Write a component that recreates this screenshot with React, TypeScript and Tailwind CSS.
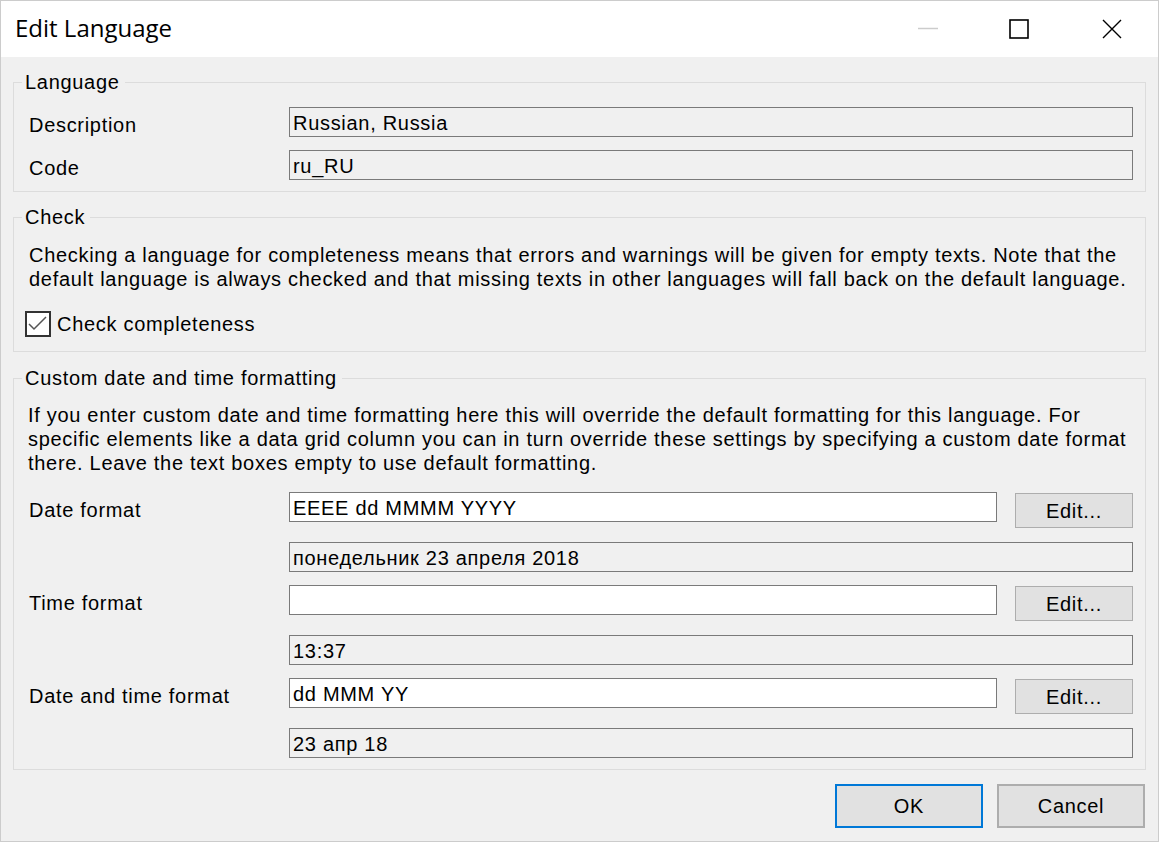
import type { ReactNode } from 'react'

function Field({ children, readOnly }: { children?: ReactNode; readOnly?: boolean }) {
  return (
    <div
      className={`h-[30px] flex-1 border border-[#7a7a7a] pl-[3px] pt-[3px] leading-[24px] whitespace-nowrap ${
        readOnly ? 'bg-[#f0f0f0]' : 'bg-white'
      }`}
    >
      {children}
    </div>
  )
}

function EditButton() {
  return (
    <button className="mt-[1px] h-[35px] w-[118px] shrink-0 border border-[#adadad] bg-[#e1e1e1] leading-[24px]">
      Edit...
    </button>
  )
}

function Group({ title, className, children }: { title: string; className?: string; children: ReactNode }) {
  return (
    <fieldset className={`mx-[12px] min-w-0 border border-[#dcdcdc] p-0 ${className ?? ''}`}>
      <legend className="ml-[8px] pl-[3px] pr-[5px] leading-[24px]">{title}</legend>
      {children}
    </fieldset>
  )
}

function Row({ label, children }: { label?: string; children: ReactNode }) {
  return (
    <div className="flex">
      <div className="w-[260px] shrink-0 pt-[6px] leading-[24px] whitespace-nowrap">{label}</div>
      <div className="flex flex-1 items-start gap-[18px]">{children}</div>
    </div>
  )
}

export default function App() {
  return (
    <div className="flex h-[842px] w-[1159px] flex-col border border-[#cccccc] bg-[#f0f0f0] font-['Liberation_Sans',Arial,sans-serif] text-[20px] tracking-[0.7px] text-black">
      {/* Title bar */}
      <div className="flex h-[56px] shrink-0 bg-white">
        <div className="pl-[14px] pt-[11px] font-['Open_Sans',sans-serif] text-[24px] leading-[32px] tracking-normal">
          Edit Language
        </div>
        <div className="ml-auto flex items-start pt-[18px] pr-[36px]">
          <svg width="20" height="20" viewBox="0 0 20 20">
            <line x1="0" y1="9.5" x2="20" y2="9.5" stroke="#cccccc" strokeWidth="1.5" />
          </svg>
          <svg width="20" height="20" viewBox="0 0 20 20" className="ml-[71px]">
            <rect x="1" y="1" width="18" height="18" fill="none" stroke="#000" strokeWidth="1.6" />
          </svg>
          <svg width="20" height="20" viewBox="0 0 20 20" className="ml-[73px]">
            <path d="M1 1 L19 19 M19 1 L1 19" stroke="#000" strokeWidth="1.4" />
          </svg>
        </div>
      </div>

      {/* Language */}
      <Group title="Language" className="mt-[13px]">
        <div className="flex flex-col gap-[13px] pt-[13px] pb-[11px] pl-[15px] pr-[12px]">
          <Row label="Description">
            <Field readOnly>Russian, Russia</Field>
          </Row>
          <Row label="Code">
            <Field readOnly>ru_RU</Field>
          </Row>
        </div>
      </Group>

      {/* Check */}
      <Group title="Check" className="mt-[13px]">
        <div className="pt-[14px] pb-[14px] pl-[14px] pr-[12px]">
          <p className="pl-[1px] leading-[24px] whitespace-nowrap">
            Checking a language for completeness means that errors and warnings will be given for empty texts. Note that the
            <br />
            default language is always checked and that missing texts in other languages will fall back on the default language.
          </p>
          <label className="mt-[20px] flex items-center">
            <span className="relative ml-[-3px] h-[26px] w-[26px] border-2 border-[#333333] bg-white">
              <svg width="22" height="22" viewBox="0 0 22 22" className="absolute left-0 top-0">
                <polyline points="2,11 7,16 19,4" fill="none" stroke="#555555" strokeWidth="1.5" />
              </svg>
            </span>
            <span className="ml-[6px] leading-[24px]">Check completeness</span>
          </label>
        </div>
      </Group>

      {/* Custom date and time formatting */}
      <Group title="Custom date and time formatting" className="mt-[14px]">
        <div className="pt-[13px] pb-[11px] pl-[15px] pr-[12px]">
          <p className="ml-[-1px] leading-[24px] whitespace-nowrap">
            If you enter custom date and time formatting here this will override the default formatting for this language. For
            <br />
            specific elements like a data grid column you can in turn override these settings by specifying a custom date format
            <br />
            there. Leave the text boxes empty to use default formatting.
          </p>
          <div className="mt-[17px] flex flex-col gap-[13px]">
            <Row label="Date format">
              <Field>EEEE dd MMMM YYYY</Field>
              <EditButton />
            </Row>
            <div className="mt-[1px]">
              <Row>
                <Field readOnly>понедельник 23 апреля 2018</Field>
              </Row>
            </div>
            <Row label="Time format">
              <Field />
              <EditButton />
            </Row>
            <div className="mt-[1px]">
              <Row>
                <Field readOnly>13:37</Field>
              </Row>
            </div>
            <Row label="Date and time format">
              <Field>dd MMM YY</Field>
              <EditButton />
            </Row>
            <div className="mt-[1px]">
              <Row>
                <Field readOnly>23 апр 18</Field>
              </Row>
            </div>
          </div>
        </div>
      </Group>

      {/* Footer buttons */}
      <div className="mt-[14px] flex justify-end gap-[14px] pr-[13px]">
        <button className="h-[44px] w-[148px] border-2 border-[#0078d7] bg-[#e1e1e1] leading-[24px]">OK</button>
        <button className="h-[44px] w-[148px] border-2 border-[#adadad] bg-[#e1e1e1] leading-[24px]">Cancel</button>
      </div>
    </div>
  )
}
